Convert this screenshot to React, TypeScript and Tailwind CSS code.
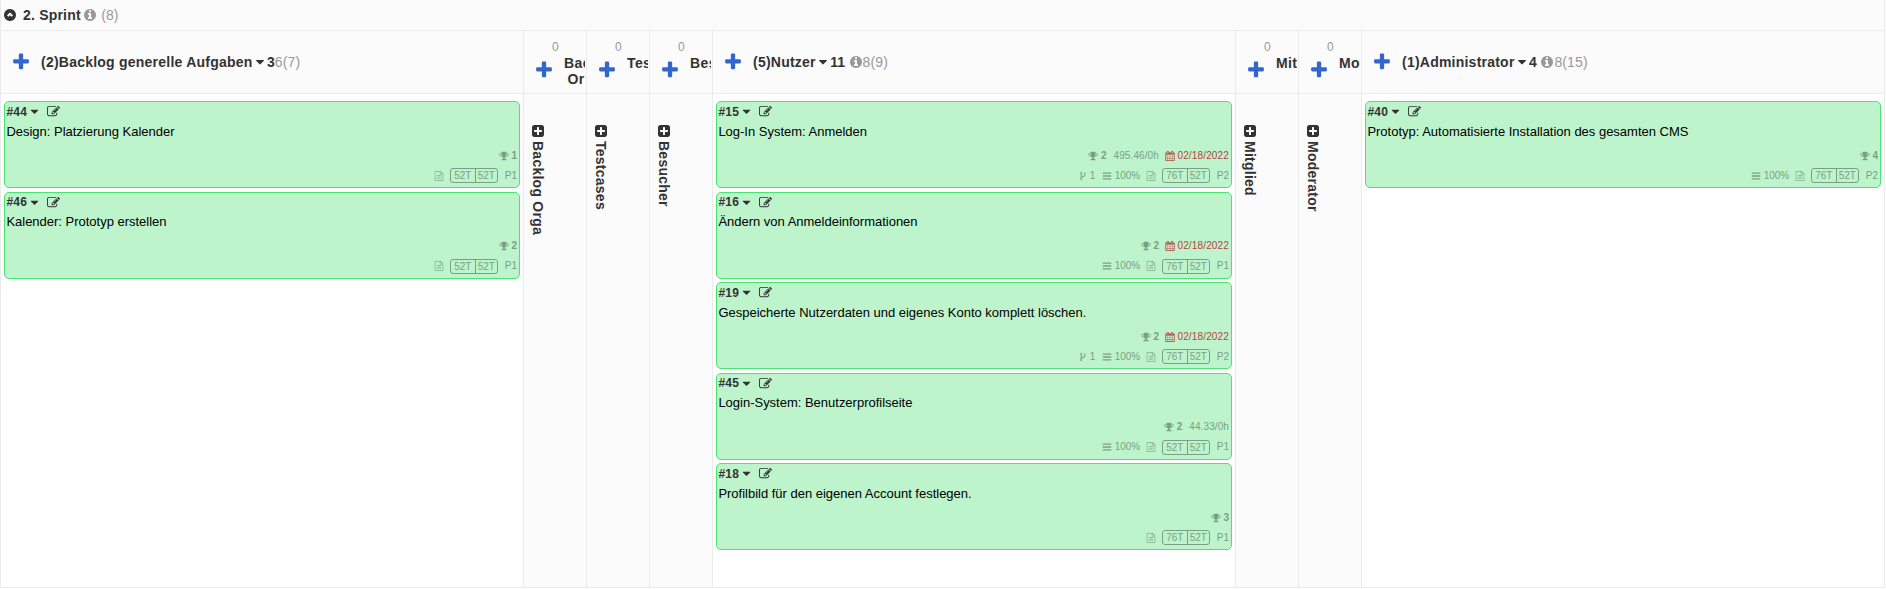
import React from "react";

const PATHS = {
  chevronUp:
    "M1146 1099l102-102q19-19 19-45t-19-45l-307-307q-19-19-45-19t-45 19l-307 307q-19 19-19 45t19 45l102 102q19 19 45 19t45-19l160-160 160 160q19 19 45 19t45-19zm518-203q0 209-103 385.5t-279.5 279.5-385.5 103-385.5-103-279.5-279.5-103-385.5 103-385.5 279.5-279.5 385.5-103 385.5 103 279.5 279.5 103 385.5z",
  info:
    "M1152 1376v-160q0-14-9-23t-23-9h-96v-512q0-14-9-23t-23-9h-320q-14 0-23 9t-9 23v160q0 14 9 23t23 9h96v320h-96q-14 0-23 9t-9 23v160q0 14 9 23t23 9h448q14 0 23-9t9-23zm-128-896v-160q0-14-9-23t-23-9h-192q-14 0-23 9t-9 23v160q0 14 9 23t23 9h192q14 0 23-9t9-23zm640 416q0 209-103 385.5t-279.5 279.5-385.5 103-385.5-103-279.5-279.5-103-385.5 103-385.5 279.5-279.5 385.5-103 385.5 103 279.5 279.5 103 385.5z",
  plus:
    "M1600 736v192q0 40-28 68t-68 28h-416v416q0 40-28 68t-68 28h-192q-40 0-68-28t-28-68v-416h-416q-40 0-68-28t-28-68v-192q0-40 28-68t68-28h416v-416q0-40 28-68t68-28h192q40 0 68 28t28 68v416h416q40 0 68 28t28 68z",
  caret:
    "M1408 704q0 26-19 45l-448 448q-19 19-45 19t-45-19l-448-448q-19-19-19-45t19-45 45-19h896q26 0 45 19t19 45z",
  edit:
    "M888 1184l116-116-152-152-116 116v56h96v96h56zm440-720q-16-16-33 1l-350 350q-17 17-1 33t33-1l350-350q17-17 1-33zm80 594v190q0 119-84.5 203.5t-203.5 84.5h-832q-119 0-203.5-84.5t-84.5-203.5v-832q0-119 84.5-203.5t203.5-84.5h832q63 0 117 25 15 7 18 23 3 17-9 29l-49 49q-14 14-32 8-23-6-45-6h-832q-66 0-113 47t-47 113v832q0 66 47 113t113 47h832q66 0 113-47t47-113v-126q0-13 9-22l64-64q15-15 35-7t20 29zm-96-738l288 288-672 672h-288v-288zm444 132l-92 92-288-288 92-92q28-28 68-28t68 28l152 152q28 28 28 68t-28 68z",
  trophy:
    "M522 883q-74-162-74-371h-256v96q0 78 94.5 162t235.5 113zm1078-275v-96h-256q0 209-74 371 141-29 235.5-113t94.5-162zm128-128v128q0 71-41.5 143t-112 130-173 97.5-215.5 44.5q-42 54-95 95-38 34-52.5 72.5t-14.5 89.5q0 54 30.5 91t97.5 37q75 0 133.5 45.5t58.5 114.5v64q0 14-9 23t-23 9h-832q-14 0-23-9t-9-23v-64q0-69 58.5-114.5t133.5-45.5q67 0 97.5-37t30.5-91q0-51-14.5-89.5t-52.5-72.5q-53-41-95-95-113-5-215.5-44.5t-173-97.5-112-130-41.5-143v-128q0-40 28-68t68-28h288v-96q0-66 47-113t113-47h576q66 0 113 47t47 113v96h288q40 0 68 28t28 68z",
  calendar:
    "M192 1664h288v-288h-288v288zm352 0h320v-288h-320v288zm-352-352h288v-320h-288v320zm352 0h320v-320h-320v320zm-352-384h288v-288h-288v288zm736 736h320v-288h-320v288zm-384-736h320v-288h-320v288zm768 736h288v-288h-288v288zm-384-352h320v-320h-320v320zm-352-864v-288q0-13-9.5-22.5t-22.5-9.5h-64q-13 0-22.5 9.5t-9.5 22.5v288q0 13 9.5 22.5t22.5 9.5h64q13 0 22.5-9.5t9.5-22.5zm736 864h288v-320h-288v320zm-384-384h320v-288h-320v288zm384 0h288v-288h-288v288zm32-480v-288q0-13-9.5-22.5t-22.5-9.5h-64q-13 0-22.5 9.5t-9.5 22.5v288q0 13 9.5 22.5t22.5 9.5h64q13 0 22.5-9.5t9.5-22.5zm384-64v1280q0 52-38 90t-90 38h-1408q-52 0-90-38t-38-90v-1280q0-52 38-90t90-38h128v-96q0-66 47-113t113-47h64q66 0 113 47t47 113v96h384v-96q0-66 47-113t113-47h64q66 0 113 47t47 113v96h128q52 0 90 38t38 90z",
  bars:
    "M1664 1344v128q0 26-19 45t-45 19h-1408q-26 0-45-19t-19-45v-128q0-26 19-45t45-19h1408q26 0 45 19t19 45zm0-512v128q0 26-19 45t-45 19h-1408q-26 0-45-19t-19-45v-128q0-26 19-45t45-19h1408q26 0 45 19t19 45zm0-512v128q0 26-19 45t-45 19h-1408q-26 0-45-19t-19-45v-128q0-26 19-45t45-19h1408q26 0 45 19t19 45z",
  file:
    "M1596 380q28 28 48 76t20 88v1152q0 40-28 68t-68 28h-1344q-40 0-68-28t-28-68v-1600q0-40 28-68t68-28h896q40 0 88 20t76 48zm-444-244v376h376q-10-29-22-41l-313-313q-12-12-41-22zm384 1528v-1024h-416q-40 0-68-28t-28-68v-416h-768v1536h1280zm-1024-864q0-14 9-23t23-9h704q14 0 23 9t9 23v64q0 14-9 23t-23 9h-704q-14 0-23-9t-9-23v-64zm736 224q14 0 23 9t9 23v64q0 14-9 23t-23 9h-704q-14 0-23-9t-9-23v-64q0-14 9-23t23-9h704zm0 256q14 0 23 9t9 23v64q0 14-9 23t-23 9h-704q-14 0-23-9t-9-23v-64q0-14 9-23t23-9h704z",
  fork:
    "M672 1472q0-40-28-68t-68-28-68 28-28 68 28 68 68 28 68-28 28-68zm0-1152q0-40-28-68t-68-28-68 28-28 68 28 68 68 28 68-28 28-68zm640 128q0-40-28-68t-68-28-68 28-28 68 28 68 68 28 68-28 28-68zm96 0q0 52-26 96.5t-70 69.5q-2 287-226 414-67 38-203 81-128 40-169.5 71t-41.5 100v26q44 25 70 69.5t26 96.5q0 80-56 136t-136 56-136-56-56-136q0-52 26-96.5t70-69.5v-820q-44-25-70-69.5t-26-96.5q0-80 56-136t136-56 136 56 56 136q0 52-26 96.5t-70 69.5v497q54-26 154-57 55-17 87.5-29.5t70.5-31 59-39.5 40.5-51 28-69.5 8.5-91.5q-44-25-70-69.5t-26-96.5q0-80 56-136t136-56 136 56 56 136z",
  plusSquare:
    "M1408 960v-128q0-26-19-45t-45-19h-320v-320q0-26-19-45t-45-19h-128q-26 0-45 19t-19 45v320h-320q-26 0-45 19t-19 45v128q0 26 19 45t45 19h320v320q0 26 19 45t45 19h128q26 0 45-19t19-45v-320h320q26 0 45-19t19-45zm256-544v960q0 119-84.5 203.5t-203.5 84.5h-960q-119 0-203.5-84.5t-84.5-203.5v-960q0-119 84.5-203.5t203.5-84.5h960q119 0 203.5 84.5t84.5 203.5z",
};

function Icon({ name, className }: { name: keyof typeof PATHS; className: string }) {
  return (
    <svg viewBox="0 0 1792 1792" fill="currentColor" className={"shrink-0 overflow-visible " + className}>
      <path d={PATHS[name]} />
    </svg>
  );
}

type Task = {
  id: string;
  title: string;
  points: string;
  effort?: string;
  due?: string;
  forks?: string;
  progress?: string;
  age: string;
  prio: string;
};

function Card({ t }: { t: Task }) {
  return (
    <article className="flex h-[87px] w-[516px] flex-col rounded-[5px] border border-[#4be371] bg-[#bdf4cc] pl-[1.4px] pr-[2px]">
      <div className="flex h-[17.8px] items-center pt-[2px] text-[12px] font-bold text-[#333]">
        <span className="w-[22px] tracking-[0.3px]">{t.id}</span>
        <Icon name="caret" className="size-[13px]" />
        <Icon name="edit" className="ml-[5.5px] size-[13px]" />
      </div>
      <div className="h-[26px] whitespace-nowrap text-[13px] leading-[24px] tracking-[-0.01px] text-black">{t.title}</div>
      <div className="flex h-[20px] items-center justify-end text-[10px] leading-[12px] text-[#7b9f85]">
        <Icon name="trophy" className="size-[10px]" />
        <span className="ml-[2.5px] font-bold">{t.points}</span>
        {t.effort && <span className="ml-[7px] tracking-[0.1px]">{t.effort}</span>}
        {t.due && (
          <span className="ml-[6px] flex items-center text-[#b8433f]">
            <Icon name="calendar" className="size-[10px]" />
            <span className="ml-[2.5px] tracking-[0.15px]">{t.due}</span>
          </span>
        )}
      </div>
      <div className="flex h-[20px] items-center justify-end text-[10px] leading-[12px] text-[#7b9f85]">
        {t.forks && (
          <span className="mr-[7px] flex items-center">
            <Icon name="fork" className="size-[10px]" />
            <span className="ml-[2px]">{t.forks}</span>
          </span>
        )}
        {t.progress && (
          <span className="mr-[6px] flex items-center">
            <Icon name="bars" className="size-[10px]" />
            <span className="ml-[2.5px]">{t.progress}</span>
          </span>
        )}
        <Icon name="file" className="size-[10px] opacity-80" />
        <span className="ml-[5.5px] flex h-[15px] w-[48px] rounded-[3px] border border-current text-center leading-[13px]">
          <span className="w-[25px] border-r border-current">{t.age}</span>
          <span className="w-[21px]">52T</span>
        </span>
        <span className="ml-[7px]">{t.prio}</span>
      </div>
    </article>
  );
}

function WideColumn({
  name,
  sum,
  info,
  rest,
  tasks,
}: {
  name: string;
  sum: string;
  info?: boolean;
  rest: string;
  tasks: Task[];
}) {
  return (
    <section className="flex w-[523px] shrink-0 flex-col border-r border-[#ebebeb]">
      <header className="flex h-[63px] items-center border-b border-[#ebebeb] bg-[#fbfbfb] pl-[10px] text-[14px] text-[#333]">
        <Icon name="plus" className="size-[20px] text-[#3366cc]" />
        <span className="ml-[10px] whitespace-nowrap font-bold tracking-[0.23px]">{name}</span>
        <Icon name="caret" className="ml-[0.5px] size-[14px]" />
        <span className="font-bold">{sum}</span>
        {info && <Icon name="info" className="ml-[3.5px] size-[14px] text-[#999]" />}
        <span className="tracking-[0.15px] text-[#999]">{rest}</span>
      </header>
      <div className="flex grow flex-col gap-[3.5px] pl-[3px] pt-[7px]">
        {tasks.map((t) => (
          <Card key={t.id} t={t} />
        ))}
      </div>
    </section>
  );
}

function NarrowColumn({ label, lines }: { label: string; lines: string[] }) {
  return (
    <section className="flex w-[63px] shrink-0 flex-col border-r border-[#ebebeb] bg-[#fbfbfb]">
      <header className="flex h-[63px] overflow-hidden border-b border-[#ebebeb] text-[14px] text-[#333]">
        <div className="flex w-[40px] shrink-0 flex-col items-start">
          <span className="ml-[28px] mt-[8px] text-[12px] leading-[16px] text-[#999]">0</span>
          <Icon name="plus" className="ml-[10px] mt-[5px] size-[20px] text-[#3366cc]" />
        </div>
        <div className="mr-[1px] flex min-w-0 grow flex-col items-start overflow-hidden pt-[24px] font-bold leading-[16px] tracking-[0.4px]">
          <span>{lines[0]}</span>
          {lines[1] && <span className="ml-[3.5px]">{lines[1]}</span>}
        </div>
      </header>
      <div className="flex flex-col pl-[7px] pt-[30px] text-[#333]">
        <Icon name="plusSquare" className="size-[14px]" />
        <span className="-ml-[1px] mt-[3px] w-[16px] whitespace-nowrap text-[14px] font-bold leading-[16px] tracking-[0.25px] [writing-mode:vertical-rl]">
          {label}
        </span>
      </div>
    </section>
  );
}

const BACKLOG: Task[] = [
  { id: "#44", title: "Design: Platzierung Kalender", points: "1", age: "52T", prio: "P1" },
  { id: "#46", title: "Kalender: Prototyp erstellen", points: "2", age: "52T", prio: "P1" },
];

const NUTZER: Task[] = [
  { id: "#15", title: "Log-In System: Anmelden", points: "2", effort: "495.46/0h", due: "02/18/2022", forks: "1", progress: "100%", age: "76T", prio: "P2" },
  { id: "#16", title: "Ändern von Anmeldeinformationen", points: "2", due: "02/18/2022", progress: "100%", age: "76T", prio: "P1" },
  { id: "#19", title: "Gespeicherte Nutzerdaten und eigenes Konto komplett löschen.", points: "2", due: "02/18/2022", forks: "1", progress: "100%", age: "76T", prio: "P2" },
  { id: "#45", title: "Login-System: Benutzerprofilseite", points: "2", effort: "44.33/0h", progress: "100%", age: "52T", prio: "P1" },
  { id: "#18", title: "Profilbild für den eigenen Account festlegen.", points: "3", age: "76T", prio: "P1" },
];

const ADMIN: Task[] = [
  { id: "#40", title: "Prototyp: Automatisierte Installation des gesamten CMS", points: "4", progress: "100%", age: "76T", prio: "P2" },
];

export default function App() {
  return (
    <main className="flex h-[589px] w-[1886px] flex-col overflow-hidden bg-white font-['Liberation_Sans',Arial,sans-serif]">
      <div className="flex h-[588px] w-[1885px] flex-col border-b border-l border-[#ebebeb]">
        <div className="flex h-[31px] shrink-0 items-center border-b border-r border-[#ebebeb] bg-[#fbfbfb] pl-[2px] text-[14px] text-[#333]">
          <Icon name="chevronUp" className="size-[14px]" />
          <span className="ml-[6px] whitespace-nowrap font-bold tracking-[0.2px]">2. Sprint</span>
          <Icon name="info" className="ml-[2.5px] size-[14px] text-[#999]" />
          <span className="ml-[4px] text-[#999]">(8)</span>
        </div>
        <div className="flex grow">
          <WideColumn name="(2)Backlog generelle Aufgaben" sum="3" rest="6(7)" tasks={BACKLOG} />
          <NarrowColumn label="Backlog Orga" lines={["Backlog", "Orga"]} />
          <NarrowColumn label="Testcases" lines={["Testcases"]} />
          <NarrowColumn label="Besucher" lines={["Besucher"]} />
          <WideColumn name="(5)Nutzer" sum="11" info rest="8(9)" tasks={NUTZER} />
          <NarrowColumn label="Mitglied" lines={["Mitglied"]} />
          <NarrowColumn label="Moderator" lines={["Moderator"]} />
          <WideColumn name="(1)Administrator" sum="4" info rest="8(15)" tasks={ADMIN} />
        </div>
      </div>
    </main>
  );
}
